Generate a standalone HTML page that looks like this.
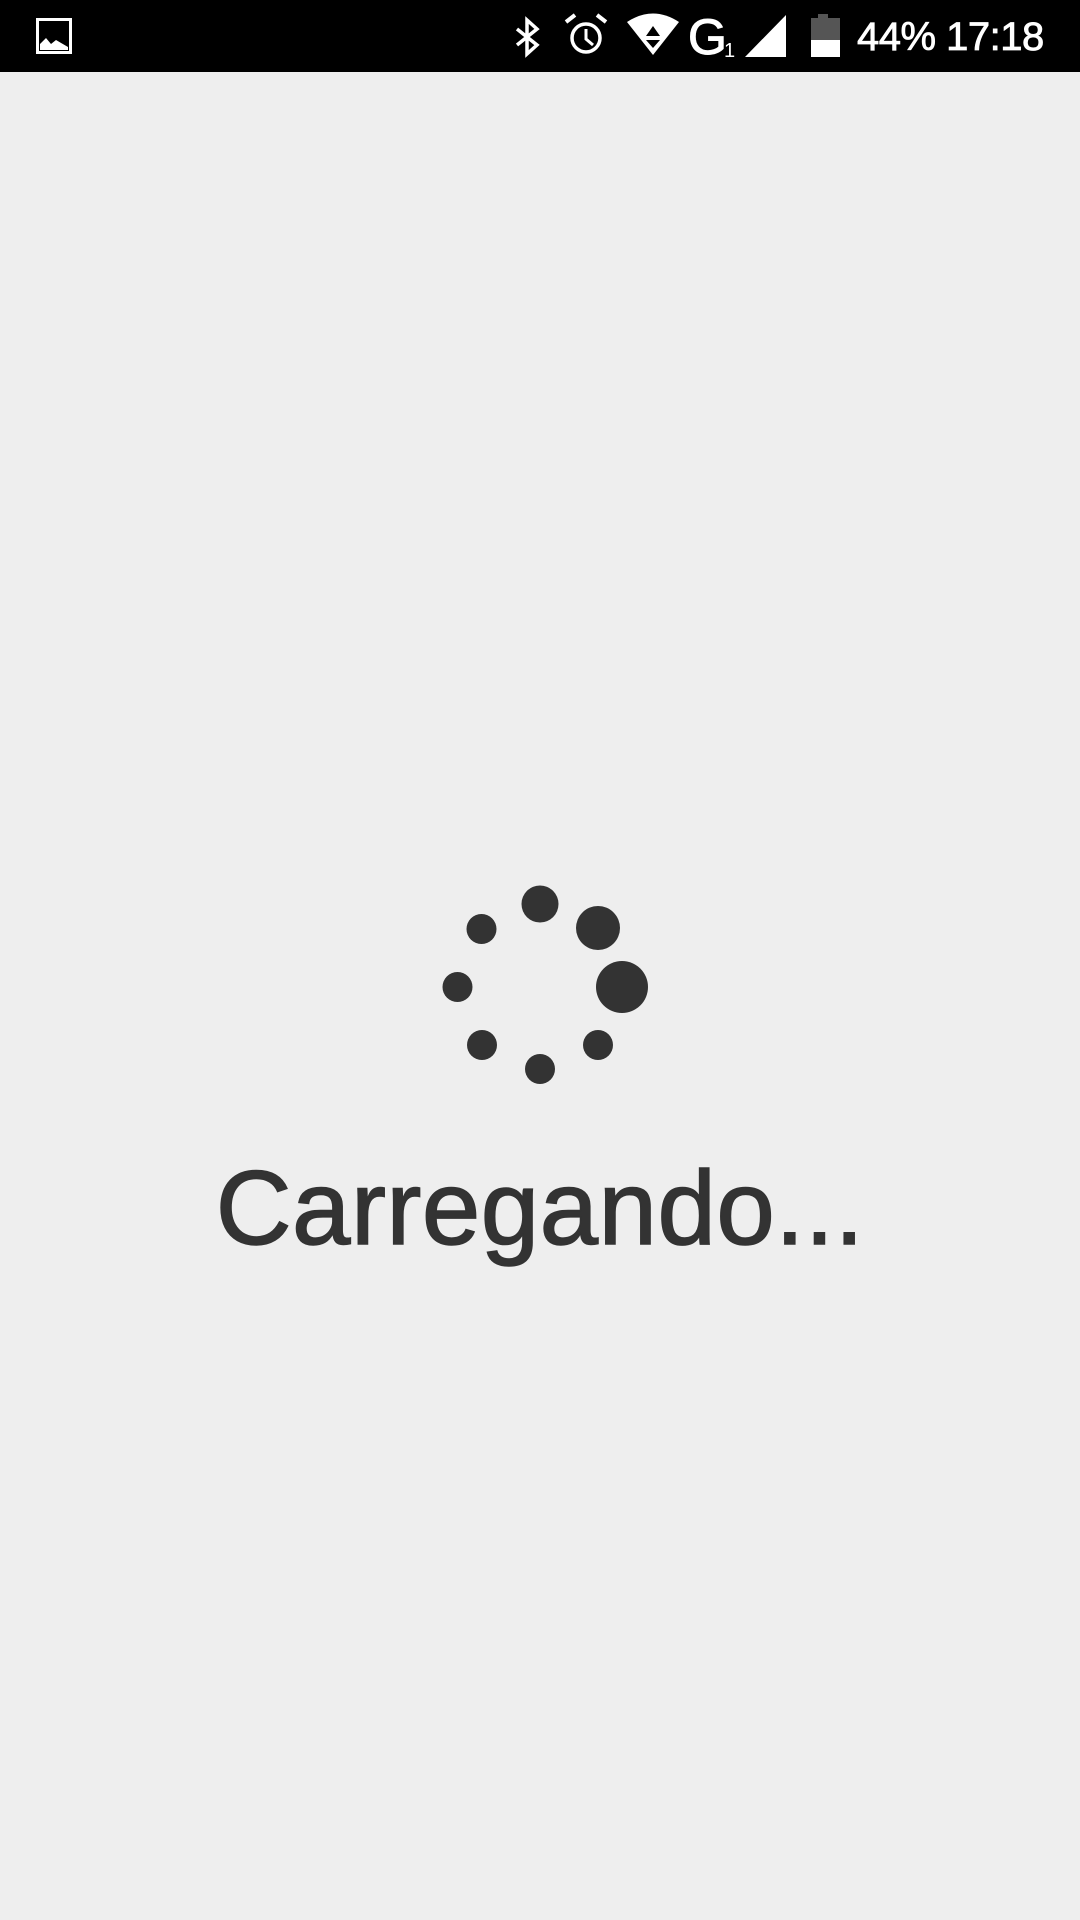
<!DOCTYPE html>
<html><head><meta charset="utf-8"><style>
html,body{margin:0;padding:0;width:1080px;height:1920px;background:#eeeeee;overflow:hidden;font-family:"Liberation Sans",sans-serif}
.sb{position:absolute;left:0;top:0;width:1080px;height:72px;background:#000}
.t{position:absolute;left:857px;top:15px;color:#fff;font-size:40px;letter-spacing:-0.5px;white-space:nowrap;-webkit-text-stroke:0.8px #fff}
.load{position:absolute;left:0;width:1080px;top:1156px;text-align:center;font-size:105px;color:#333;line-height:1;-webkit-text-stroke:1.5px #333;letter-spacing:0.5px}
</style></head><body>
<div class="sb">
<svg width="1080" height="72" style="position:absolute;left:0;top:0">
 <rect x="37.5" y="19.5" width="33" height="33" fill="none" stroke="#fff" stroke-width="3"/>
 <path d="M40 50 L40 44 L46 38 L51 44 L56 40 L68 47 L68 50 Z" fill="#fff"/>
 <path d="M517 29 L537 45 L527 54 L527 20 L537 29 L517 45" fill="none" stroke="#fff" stroke-width="3.5"/>
 <circle cx="586" cy="38" r="14" fill="none" stroke="#fff" stroke-width="3.5"/>
 <path d="M586 29 L586 39 L593 45" fill="none" stroke="#fff" stroke-width="3"/>
 <path d="M566 22 L575 15 M597 15 L606 22" stroke="#fff" stroke-width="4"/>
 <path d="M627 22 Q653 5 679 22 L653 55 Z" fill="#fff"/>
 <path d="M653 26 L646 36 L660 36 Z M646 40 L660 40 L653 48 Z" fill="#000"/>
 <text x="688" y="54" fill="#fff" font-size="50" font-family="Liberation Sans" stroke="#fff" stroke-width="1">G</text>
 <text x="724" y="57" fill="#fff" font-size="20" font-family="Liberation Sans">1</text>
 <path d="M745 57 L786 15 L786 57 Z" fill="#fff"/>
 <rect x="818" y="14" width="10" height="5" fill="#555"/>
 <rect x="811" y="18" width="29" height="22" fill="#555"/>
 <rect x="811" y="40" width="29" height="17" fill="#fff"/>
</svg>
<div class="t">44% 17:18</div>
</div>
<svg width="1080" height="1920" style="position:absolute;left:0;top:0">
 <g fill="#333">
  <circle cx="540" cy="904" r="18.5"/>
  <circle cx="598" cy="928" r="22"/>
  <circle cx="622" cy="987" r="26"/>
  <circle cx="598" cy="1045" r="15"/>
  <circle cx="540" cy="1069" r="15"/>
  <circle cx="482" cy="1045" r="15"/>
  <circle cx="457.5" cy="987" r="15"/>
  <circle cx="481.5" cy="929" r="15"/>
 </g>
</svg>
<div class="load">Carregando...</div>
</body></html>
